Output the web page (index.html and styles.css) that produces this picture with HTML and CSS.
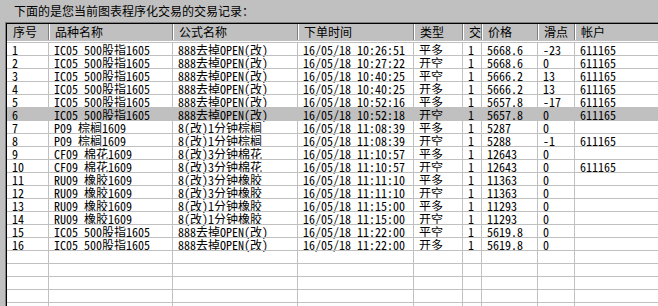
FILE: index.html
```html
<!DOCTYPE html>
<html lang="zh-CN">
<head>
<meta charset="utf-8">
<title>交易记录</title>
<link rel="stylesheet" href="styles.css">
</head>
<body>
<div class="title">下面的是您当前图表程序化交易的交易记录：</div>
<div class="frame">
  <div class="list">
    <div class="row head">
      <div class="c">序号</div><div class="c">品种名称</div><div class="c">公式名称</div><div class="c">下单时间</div><div class="c">类型</div><div class="c">交</div><div class="c">价格</div><div class="c">滑点</div><div class="c">帐户</div>
    </div>
    <div class="row"><div class="c">1</div><div class="c">IC05 500股指1605</div><div class="c">888去掉OPEN(改)</div><div class="c">16/05/18 10:26:51</div><div class="c">平多</div><div class="c">1</div><div class="c">5668.6</div><div class="c">-23</div><div class="c">611165</div></div>
    <div class="row"><div class="c">2</div><div class="c">IC05 500股指1605</div><div class="c">888去掉OPEN(改)</div><div class="c">16/05/18 10:27:22</div><div class="c">开空</div><div class="c">1</div><div class="c">5668.6</div><div class="c">0</div><div class="c">611165</div></div>
    <div class="row"><div class="c">3</div><div class="c">IC05 500股指1605</div><div class="c">888去掉OPEN(改)</div><div class="c">16/05/18 10:40:25</div><div class="c">平空</div><div class="c">1</div><div class="c">5666.2</div><div class="c">13</div><div class="c">611165</div></div>
    <div class="row"><div class="c">4</div><div class="c">IC05 500股指1605</div><div class="c">888去掉OPEN(改)</div><div class="c">16/05/18 10:40:25</div><div class="c">开多</div><div class="c">1</div><div class="c">5666.2</div><div class="c">13</div><div class="c">611165</div></div>
    <div class="row"><div class="c">5</div><div class="c">IC05 500股指1605</div><div class="c">888去掉OPEN(改)</div><div class="c">16/05/18 10:52:16</div><div class="c">平多</div><div class="c">1</div><div class="c">5657.8</div><div class="c">-17</div><div class="c">611165</div></div>
    <div class="row sel"><div class="c">6</div><div class="c">IC05 500股指1605</div><div class="c">888去掉OPEN(改)</div><div class="c">16/05/18 10:52:18</div><div class="c">开空</div><div class="c">1</div><div class="c">5657.8</div><div class="c">0</div><div class="c">611165</div></div>
    <div class="row"><div class="c">7</div><div class="c">P09 棕榈1609</div><div class="c">8(改)1分钟棕榈</div><div class="c">16/05/18 11:08:39</div><div class="c">平多</div><div class="c">1</div><div class="c">5287</div><div class="c">0</div><div class="c"></div></div>
    <div class="row"><div class="c">8</div><div class="c">P09 棕榈1609</div><div class="c">8(改)1分钟棕榈</div><div class="c">16/05/18 11:08:39</div><div class="c">开空</div><div class="c">1</div><div class="c">5288</div><div class="c">-1</div><div class="c">611165</div></div>
    <div class="row"><div class="c">9</div><div class="c">CF09 棉花1609</div><div class="c">8(改)3分钟棉花</div><div class="c">16/05/18 11:10:57</div><div class="c">平多</div><div class="c">1</div><div class="c">12643</div><div class="c">0</div><div class="c"></div></div>
    <div class="row"><div class="c">10</div><div class="c">CF09 棉花1609</div><div class="c">8(改)3分钟棉花</div><div class="c">16/05/18 11:10:57</div><div class="c">开空</div><div class="c">1</div><div class="c">12643</div><div class="c">0</div><div class="c">611165</div></div>
    <div class="row"><div class="c">11</div><div class="c">RU09 橡胶1609</div><div class="c">8(改)3分钟橡胶</div><div class="c">16/05/18 11:11:10</div><div class="c">平多</div><div class="c">1</div><div class="c">11363</div><div class="c">0</div><div class="c"></div></div>
    <div class="row"><div class="c">12</div><div class="c">RU09 橡胶1609</div><div class="c">8(改)3分钟橡胶</div><div class="c">16/05/18 11:11:10</div><div class="c">开空</div><div class="c">1</div><div class="c">11363</div><div class="c">0</div><div class="c"></div></div>
    <div class="row"><div class="c">13</div><div class="c">RU09 橡胶1609</div><div class="c">8(改)1分钟橡胶</div><div class="c">16/05/18 11:15:00</div><div class="c">平多</div><div class="c">1</div><div class="c">11293</div><div class="c">0</div><div class="c"></div></div>
    <div class="row"><div class="c">14</div><div class="c">RU09 橡胶1609</div><div class="c">8(改)1分钟橡胶</div><div class="c">16/05/18 11:15:00</div><div class="c">开空</div><div class="c">1</div><div class="c">11293</div><div class="c">0</div><div class="c"></div></div>
    <div class="row"><div class="c">15</div><div class="c">IC05 500股指1605</div><div class="c">888去掉OPEN(改)</div><div class="c">16/05/18 11:22:00</div><div class="c">平空</div><div class="c">1</div><div class="c">5619.8</div><div class="c">0</div><div class="c"></div></div>
    <div class="row"><div class="c">16</div><div class="c">IC05 500股指1605</div><div class="c">888去掉OPEN(改)</div><div class="c">16/05/18 11:22:00</div><div class="c">开多</div><div class="c">1</div><div class="c">5619.8</div><div class="c">0</div><div class="c"></div></div>
    <div class="row"><div class="c"></div><div class="c"></div><div class="c"></div><div class="c"></div><div class="c"></div><div class="c"></div><div class="c"></div><div class="c"></div><div class="c"></div></div>
    <div class="row"><div class="c"></div><div class="c"></div><div class="c"></div><div class="c"></div><div class="c"></div><div class="c"></div><div class="c"></div><div class="c"></div><div class="c"></div></div>
    <div class="row"><div class="c"></div><div class="c"></div><div class="c"></div><div class="c"></div><div class="c"></div><div class="c"></div><div class="c"></div><div class="c"></div><div class="c"></div></div>
    <div class="row"><div class="c"></div><div class="c"></div><div class="c"></div><div class="c"></div><div class="c"></div><div class="c"></div><div class="c"></div><div class="c"></div><div class="c"></div></div>
    <div class="row"><div class="c"></div><div class="c"></div><div class="c"></div><div class="c"></div><div class="c"></div><div class="c"></div><div class="c"></div><div class="c"></div><div class="c"></div></div>
  </div>
</div>
</body>
</html>
```
FILE: styles.css
```css
html, body {
  margin: 0;
  padding: 0;
  background: #c0c0c0;
  overflow: hidden;
}
body {
  width: 658px;
  height: 306px;
  font-family: "Noto Sans Mono CJK SC", "Noto Sans CJK SC", "Liberation Mono", monospace;
  font-size: 12px;
  color: #000;
}
.title {
  box-sizing: border-box;
  height: 22px;
  padding: 4px 0 0 14px;
  line-height: 14px;
}
.frame {
  margin-left: 5px;
  border-left: 1px solid #808080;
  border-top: 1px solid #808080;
  height: 284px;
  overflow: hidden;
}
.list {
  border-left: 1px solid #000;
  border-top: 1px solid #000;
  background: #fff;
  height: 100%;
}
.row {
  display: grid;
  grid-template-columns: 42px 124px 125px 116px 49px 19px 56px 37px 1fr;
  height: 13px;
  line-height: 11px;
  white-space: nowrap;
}
.row .c {
  box-sizing: border-box;
  height: 13px;
  border-top: 1px solid #c0c0c0;
  border-right: 1px solid #c0c0c0;
  padding: 1px 0 0 5px;
}
.row .c:last-child {
  border-right: none;
}
.row.sel .c {
  background: #c0c0c0;
}
.row.head {
  height: 17px;
  background: #c0c0c0;
  line-height: 16px;
  border-bottom: 1px solid #fff;
}
.row.head .c {
  border-top: none;
  border-right: 1px solid #808080;
  border-left: 1px solid #fff;
  padding: 0 0 0 5px;
  height: 16px;
}
.row.head .c:first-child {
  border-left: none;
  padding-left: 6px;
}
.row.head .c:last-child {
  border-right: none;
}
```
